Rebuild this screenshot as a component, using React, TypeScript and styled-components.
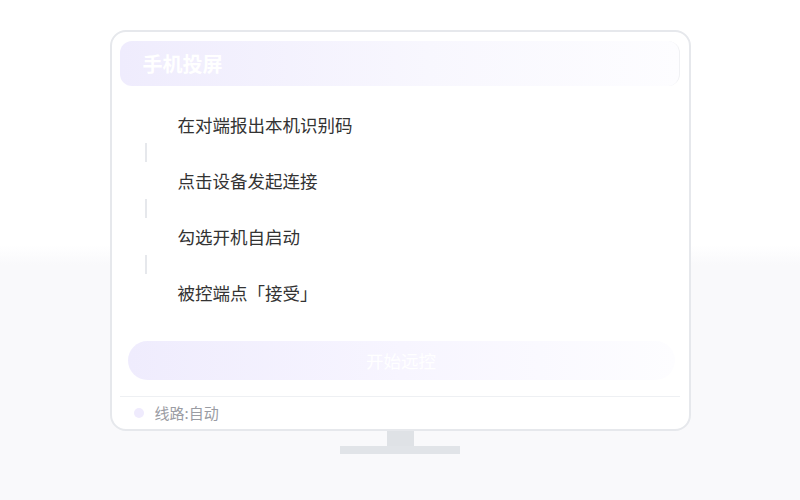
import styled, { createGlobalStyle } from 'styled-components';

const GlobalStyle = createGlobalStyle`
  body {
    margin: 0;
    font-family: "Noto Sans CJK SC", "Noto Sans", sans-serif;
    background: #ffffff;
  }
`;

const steps = ['在对端报出本机识别码', '点击设备发起连接', '勾选开机自启动', '被控端点「接受」'];

const App = () => {
  return (
    <Page>
      <GlobalStyle />
      <Monitor>
        <Header>
          <Title>手机投屏</Title>
        </Header>
        <StepList>
          {steps.map((step, i) => (
            <li key={step}>
              <StepText>{step}</StepText>
              {i < steps.length - 1 && <Connector />}
            </li>
          ))}
        </StepList>
        <StartButton>开始远控</StartButton>
        <Footer>
          <Dot />
          <FooterText>线路:自动</FooterText>
        </Footer>
      </Monitor>
      <Neck />
      <Base />
    </Page>
  );
};

export default App;

const Page = styled.div`
  height: 500px;
  box-sizing: border-box;
  padding-top: 30px;
  display: flex;
  flex-direction: column;
  align-items: center;
  background: linear-gradient(180deg, #ffffff 0%, #ffffff 49%, #f9f9fb 53%, #f9f9fb 100%);
`;

const Monitor = styled.div`
  width: 581px;
  height: 401px;
  box-sizing: border-box;
  border: 2px solid #e6e8ec;
  border-radius: 16px;
  background: #fff;
  padding: 9px 9px 0 8px;
  display: flex;
  flex-direction: column;
`;

const Header = styled.div`
  width: 560px;
  height: 45px;
  flex-shrink: 0;
  border-radius: 12px;
  background: linear-gradient(90deg, #efecfd 0%, #f8f7fe 55%, #fdfdff 100%);
  border-right: 1px solid #f0f1f4;
  box-sizing: border-box;
  display: flex;
  align-items: center;
  padding-left: 23px;
`;

const Title = styled.div`
  color: #fff;
  font-size: 20px;
  font-weight: 700;
`;

const StepList = styled.ul`
  list-style: none;
  margin: 27px 0 0;
  padding: 0;
`;

const StepText = styled.div`
  padding-left: 58px;
  height: 24px;
  line-height: 24px;
  font-size: 17.5px;
  color: #333;
`;

const Connector = styled.div`
  width: 2px;
  height: 19px;
  margin: 6px 0 7px 25px;
  background: #e6e8ec;
`;

const StartButton = styled.div`
  margin: 36px 0 0 8px;
  width: 547px;
  height: 39px;
  border-radius: 20px;
  background: linear-gradient(90deg, #efecfd 0%, #f7f5ff 50%, #fdfdff 100%);
  color: #fff;
  font-size: 17.5px;
  line-height: 1;
  display: flex;
  align-items: center;
  justify-content: center;
`;

const Footer = styled.div`
  margin-top: 16px;
  border-top: 1px solid #eef0f3;
  width: 560px;
  height: 32px;
  display: flex;
  align-items: center;
  gap: 11px;
  padding-left: 14px;
  box-sizing: border-box;
`;

const Dot = styled.span`
  width: 10px;
  height: 10px;
  border-radius: 50%;
  background: #efebfd;
`;

const FooterText = styled.span`
  font-size: 15px;
  color: #9a9ca3;
`;

const Neck = styled.div`
  width: 27px;
  height: 15px;
  background: #dfe2e6;
`;

const Base = styled.div`
  width: 120px;
  height: 8px;
  background: #e1e4e8;
`;
